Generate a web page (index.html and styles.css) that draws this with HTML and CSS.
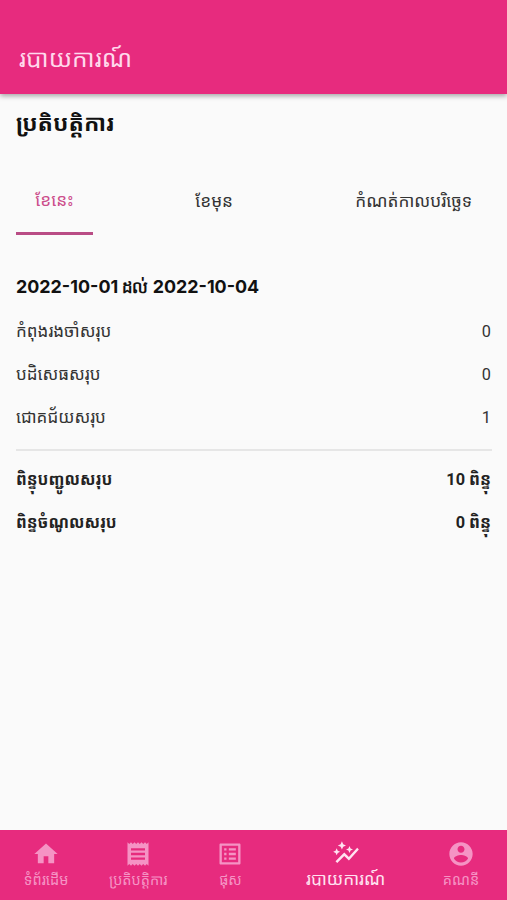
FILE: index.html
```
<!DOCTYPE html>
<html lang="km">
<head>
    <meta charset="UTF-8">
    <meta name="viewport" content="width=device-width, initial-scale=1.0">
    <title>របាយការណ៍</title>
    <link rel="stylesheet" href="styles.css">
</head>
<body>
    <header class="app-bar">
        <h1>របាយការណ៍</h1>
    </header>

    <main class="content">
        <h2>ប្រតិបត្តិការ</h2>

        <div class="tabs">
            <a class="tab active">ខែនេះ</a>
            <a class="tab">ខែមុន</a>
            <a class="tab">កំណត់កាលបរិច្ឆេទ</a>
        </div>

        <h3>2022-10-01 <span class="to">ដល់</span> 2022-10-04</h3>

        <div class="row"><span class="label">កំពុងរងចាំសរុប</span><span class="value">0</span></div>
        <div class="row"><span class="label">បដិសេធសរុប</span><span class="value">0</span></div>
        <div class="row"><span class="label">ជោគជ័យសរុប</span><span class="value">1</span></div>
        <hr>
        <div class="row total"><span>ពិន្ទុបញ្ជូលសរុប</span><span class="value">10 ពិន្ទុ</span></div>
        <div class="row total"><span>ពិន្ទចំណូលសរុប</span><span class="value">0 ពិន្ទុ</span></div>
    </main>

    <nav class="bottom-nav">
        <a class="nav-item">
            <svg viewBox="0 0 24 24"><path d="M10 20v-6h4v6h5v-8h3L12 3 2 12h3v8z"/></svg>
            <span>ទំព័រដើម</span>
        </a>
        <a class="nav-item">
            <svg viewBox="0 0 24 24"><path d="M18 17H6v-2h12v2zm0-4H6v-2h12v2zm0-4H6V7h12v2zM3 22l1.5-1.5L6 22l1.5-1.5L9 22l1.5-1.5L12 22l1.5-1.5L15 22l1.5-1.5L18 22l1.5-1.5L21 22V2l-1.5 1.5L18 2l-1.5 1.5L15 2l-1.5 1.5L12 2l-1.5 1.5L9 2 7.5 3.5 6 2 4.500 3.500 3 2v20z"/></svg>
            <span>ប្រតិបត្តិការ</span>
        </a>
        <a class="nav-item">
            <svg viewBox="0 0 24 24"><path d="M19 5v14H5V5h14m1.100-2H3.900c-.5 0-.9.400-.9.900v16.200c0 .4.400.9.900.9h16.200c.4 0 .9-.5.900-.9V3.900c0-.5-.5-.9-.9-.9zM11 7h6v2h-6V7zm0 4h6v2h-6v-2zm0 4h6v2h-6zM7 7h2v2H7zm0 4h2v2H7zm0 4h2v2H7z"/></svg>
            <span>ផុស</span>
        </a>
        <a class="nav-item selected">
            <svg viewBox="0 0 24 24"><path d="M14.060 9.940L12 9l2.060-.94L15 6l.94 2.060L18 9l-2.060.94L15 12l-.94-2.060zM4 14l.94-2.060L7 11l-2.060-.94L4 8l-.94 2.060L1 11l2.060.94L4 14zm4.500-5l1.090-2.410L12 5.500 9.590 4.410 8.500 2 7.410 4.410 5 5.500l2.410 1.090L8.500 9zm-4 11.500l6-6.010 4 4L23 8.930l-1.410-1.410-7.090 7.970-4-4L3 19l1.500 1.500z"/></svg>
            <span>របាយការណ៍</span>
        </a>
        <a class="nav-item">
            <svg viewBox="0 0 24 24"><path d="M12 2C6.480 2 2 6.480 2 12s4.480 10 10 10 10-4.480 10-10S17.520 2 12 2zm0 3c1.660 0 3 1.340 3 3s-1.340 3-3 3-3-1.340-3-3 1.340-3 3-3zm0 14.200c-2.500 0-4.710-1.280-6-3.220.03-1.990 4-3.080 6-3.080 1.990 0 5.970 1.090 6 3.080-1.290 1.940-3.500 3.220-6 3.220z"/></svg>
            <span>គណនី</span>
        </a>
    </nav>
</body>
</html>
```
FILE: styles.css
```
* {
    box-sizing: border-box;
}

body {
    margin: 0;
    height: 100vh;
    display: flex;
    flex-direction: column;
    background-color: #fafafa;
    color: #333;
    font-family: Roboto, "Noto Sans Khmer", "Noto Sans", sans-serif;
    font-size: 16px;
    overflow: hidden;
}

h1, h2, h3 {
    margin: 0;
    white-space: nowrap;
}

.app-bar {
    height: 94px;
    flex-shrink: 0;
    padding: 39px 19px 0;
    background-color: #e72b7e;
    box-shadow: 0 2px 5px rgba(0, 0, 0, 0.35);
}

.app-bar h1 {
    font-size: 24.5px;
    font-weight: 400;
    line-height: 40px;
    color: #ffd9ec;
}

.content {
    flex: 1;
    padding: 10px 15px 0 16px;
}

h2 {
    font-size: 22.7px;
    line-height: 40px;
    color: #111;
}

.tabs {
    display: flex;
    justify-content: space-between;
    height: 66px;
    margin-top: 25px;
}

.tab {
    height: 66px;
    padding: 0 20px;
    font-size: 17.2px;
    line-height: 65px;
    white-space: nowrap;
}

.tab.active {
    width: 77px;
    padding: 0;
    text-align: center;
    line-height: 63px;
    color: #cc4d8b;
    border-bottom: 3px solid #b94c85;
}

h3 {
    margin-top: 37px;
    font-family: Inter, Roboto, sans-serif;
    font-size: 17.9px;
    font-weight: 700;
    line-height: 30px;
    color: #111;
}

h3 .to {
    font-size: 16.5px;
}

.row {
    display: flex;
    justify-content: space-between;
    height: 43px;
    line-height: 43px;
    white-space: nowrap;
}

.label {
    font-size: 17px;
}

.value {
    padding-right: 1px;
    font-size: 16.3px;
}

h3 + .row {
    margin-top: 8px;
}

.total {
    font-weight: 700;
    color: #222;
}

hr {
    height: 2px;
    margin: 10px 0 7px;
    border: none;
    background-color: #e6e6e6;
}

.bottom-nav {
    display: flex;
    height: 70px;
    flex-shrink: 0;
    background-color: #e72b7e;
    color: #f593c4;
}

.nav-item {
    flex: 1 1 0;
    min-width: 0;
    display: flex;
    flex-direction: column;
    align-items: center;
    padding-top: 10px;
    font-size: 14.5px;
    line-height: 26px;
    white-space: nowrap;
}

.nav-item svg {
    width: 28px;
    height: 28px;
    flex-shrink: 0;
    fill: currentColor;
}

.nav-item.selected {
    flex-grow: 1.5;
    padding-top: 9px;
    color: #ffe3f1;
    font-size: 17.2px;
    line-height: 24px;
}
```
